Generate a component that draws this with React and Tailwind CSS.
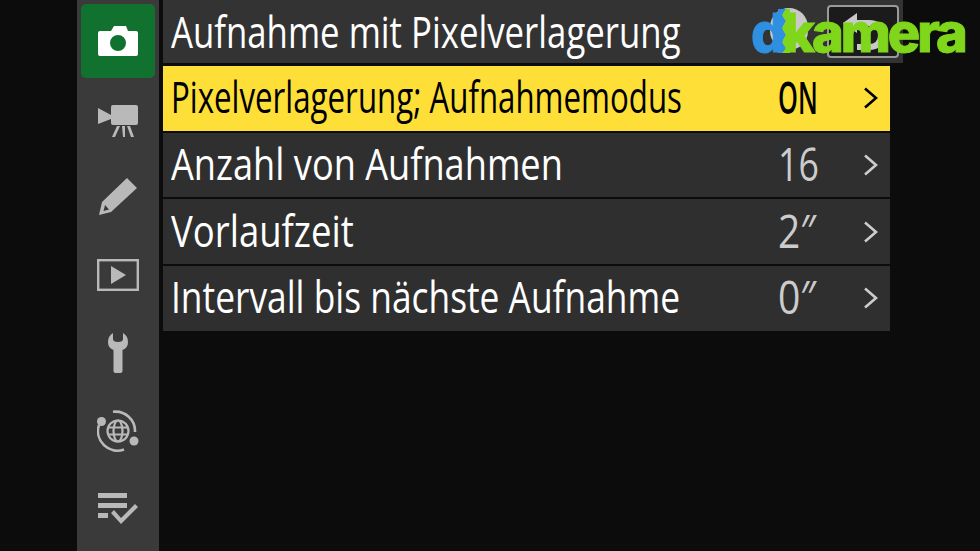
const rows = [
  { label: 'Pixelverlagerung; Aufnahmemodus', labelScale: 'scale-x-[0.71]', value: 'ON', valueScale: 'scale-x-[0.55]', active: true },
  { label: 'Anzahl von Aufnahmen', labelScale: 'scale-x-[0.822]', value: '16', valueScale: 'scale-x-[0.775]' },
  { label: 'Vorlaufzeit', labelScale: 'scale-x-[0.83]', value: '2″', valueScale: 'scale-x-[0.846]' },
  { label: 'Intervall bis nächste Aufnahme', labelScale: 'scale-x-[0.803]', value: '0″', valueScale: 'scale-x-[0.85]' },
];

function Chevron({ className }) {
  return (
    <svg viewBox="0 0 14 24" className={className} fill="none" stroke="currentColor" strokeWidth="2.6">
      <path d="M1 2.5 L12 12 L1 21.5" />
    </svg>
  );
}

function CameraIcon() {
  return (
    <svg viewBox="0 -1 40 32" className="w-[40px] h-[32px]">
      <path fill="#fff" fillRule="evenodd" d="M13 5 L16 0 H28 L30 5 H38 Q40 5 40 7 V28 Q40 30 38 30 H2 Q0 30 0 28 V7 Q0 5 2 5 Z M20 9 A8 8 0 1 0 20.01 25 A8 8 0 1 0 20 9 Z" />
    </svg>
  );
}

function MovieIcon() {
  return (
    <svg viewBox="0 -4 40 36" className="w-[40px] h-[36px]" fill="#b9b9b9">
      <path d="M0 3 L13 10 V14 L0 19 Z" />
      <rect x="13" y="0" width="27" height="20" rx="2" />
      <path d="M24 21 H27 V32 H25 Z M19 21 H22 L17 32 H14 Z M29 21 H32 L36 32 H33 Z" />
    </svg>
  );
}

function PencilIcon() {
  return (
    <svg viewBox="0 0 38 38" className="w-[38px] h-[38px]" fill="#b9b9b9">
      <path fillRule="evenodd" d="M28 0 L38 10 L12 34 L0 37 L3 24 Z M6 27 L4.5 33 L10 31.5 Z" />
    </svg>
  );
}

function PlayIcon() {
  return (
    <svg viewBox="0 0 42 32" className="w-[42px] h-[32px]">
      <rect x="1.2" y="1.2" width="39.6" height="29.6" fill="none" stroke="#b9b9b9" strokeWidth="2.4" />
      <path d="M14 7 L29 16 L14 25 Z" fill="#b9b9b9" />
    </svg>
  );
}

function WrenchIcon() {
  return (
    <svg viewBox="0 0 20 40" className="w-[20px] h-[40px]" fill="#b9b9b9">
      <path d="M5 0 V6 Q5 9 10 9 Q15 9 15 6 V0 Q20 3 20 9 Q20 15 14.5 17 V38 Q14.5 40 12.5 40 H7.5 Q5.5 40 5.5 38 V17 Q0 15 0 9 Q0 3 5 0 Z" />
    </svg>
  );
}

function GlobeIcon() {
  return (
    <svg viewBox="0 0 42 42" className="w-[42px] h-[42px]" fill="none" stroke="#b9b9b9">
      <path strokeWidth="2.6" d="M16 1.8 A19.5 19.5 0 0 1 38 22 M27 39.5 A19.5 19.5 0 0 1 2 15" />
      <circle cx="21" cy="21" r="10.5" strokeWidth="2.2" />
      <ellipse cx="21" cy="21" rx="4.5" ry="10.5" strokeWidth="2.2" />
      <path strokeWidth="2.2" d="M11 17.5 H31 M11 24.5 H31" />
      <circle cx="4.5" cy="11.5" r="4.5" fill="#b9b9b9" stroke="none" />
      <circle cx="37" cy="31" r="4.5" fill="#b9b9b9" stroke="none" />
    </svg>
  );
}

function ListIcon() {
  return (
    <svg viewBox="0 0 40 32" className="w-[40px] h-[32px]" fill="#b9b9b9">
      <rect x="0" y="0" width="29" height="5" />
      <rect x="0" y="10" width="29" height="5" />
      <rect x="0" y="20" width="10" height="5" />
      <path d="M13 20 L16 17 L23 25 L37 11 L40 14 L23 31 Z" />
    </svg>
  );
}

const icons = [CameraIcon, MovieIcon, PencilIcon, PlayIcon, WrenchIcon, GlobeIcon, ListIcon];

function Logo() {
  return (
    <div className="absolute left-[750px] top-[0px] w-[225px] h-[60px] font-['Inter',sans-serif] font-extrabold">
      <div className="absolute left-[20px] top-[8px] w-[38px] h-[42px] rounded-full bg-[#c9c9c9]" />
      <span className="absolute left-[1px] top-[3px] text-[54px] leading-[60px] text-[#2f8fe0] [-webkit-text-stroke:1px_#2f8fe0]">d</span>
      <span className="absolute left-[33px] top-[3px] text-[54px] leading-[60px] tracking-[-3px] whitespace-nowrap text-[#7fd61a] [-webkit-text-stroke:1px_#7fd61a]">kamera</span>
      {/* zigzag seam between d and k */}
      <svg viewBox="0 0 12 44" className="absolute left-[28px] top-[9px] w-[12px] h-[44px]">
        <path fill="#2f8fe0" d="M0 0 H8 L4 6 L8 12 L4 19 L8 26 L4 33 L8 39 L4 44 H0 Z" />
        <path fill="#7fd61a" d="M8 0 H12 V44 H4 L8 39 L4 33 L8 26 L4 19 L8 12 L4 6 Z" />
      </svg>
    </div>
  );
}

export default function App() {
  return (
    <div className="relative w-[980px] h-[551px] overflow-hidden flex pl-[77px] bg-[#0c0c0c] font-['Open_Sans',sans-serif]">
      <nav className="w-[82px] h-full pt-[2px] bg-[#3a3a3a] flex flex-col items-center shrink-0">
        {icons.map((Icon, i) => (
          <div key={i} className="w-full h-[78px] shrink-0 pt-[2px] px-[4px]">
            <div className={`w-[74px] h-[74px] rounded-[5px] flex items-center justify-center ${i === 0 ? 'bg-[#11712f]' : ''}`}>
              <Icon />
            </div>
          </div>
        ))}
      </nav>

      <main className="ml-[4px] flex-1">
        <header className="relative w-[740px] h-[63px] bg-[#333333] pl-[8px] pb-[2px] flex items-center">
          <span className="origin-left scale-x-[0.79] text-[44px] leading-none text-white whitespace-nowrap">Aufnahme mit Pixelverlagerung</span>
          <div className="absolute left-[664px] top-[5px] w-[72px] h-[53px] rounded-[4px] border-2 border-[#9a9a9a] bg-[#1b1b1b] flex items-center justify-center">
            <svg viewBox="0 0 44 38" className="w-[44px] h-[38px]" fill="none" stroke="#c9c9c9" strokeWidth="6">
              <path d="M12 10 H28 Q40 10 40 22 Q40 34 28 34 H16" />
              <path d="M16 0 V20 L2 10 Z" fill="#c9c9c9" stroke="none" />
            </svg>
          </div>
        </header>

        <div className="mt-[3px] w-[727px] flex flex-col gap-[2px]">
          {rows.map((row) => (
            <div
              key={row.label}
              className={`h-[64.67px] flex items-center pl-[8px] ${row.active ? 'bg-[#fedf38] text-black' : 'bg-[#2f2f2f] text-white'}`}
            >
              <span className={`w-[607px] shrink-0 pb-[4px] origin-left text-[44px] leading-none whitespace-nowrap ${row.labelScale}`}>{row.label}</span>
              <span className={`w-[86px] shrink-0 pb-[4px] origin-left text-[46px] leading-none whitespace-nowrap ${row.active ? 'font-semibold' : 'text-[#cccccc]'} ${row.valueScale}`}>{row.value}</span>
              <Chevron className={`w-[14px] h-[24px] ${row.active ? '' : 'text-[#cccccc]'}`} />
            </div>
          ))}
        </div>
      </main>

      <Logo />
    </div>
  );
}
